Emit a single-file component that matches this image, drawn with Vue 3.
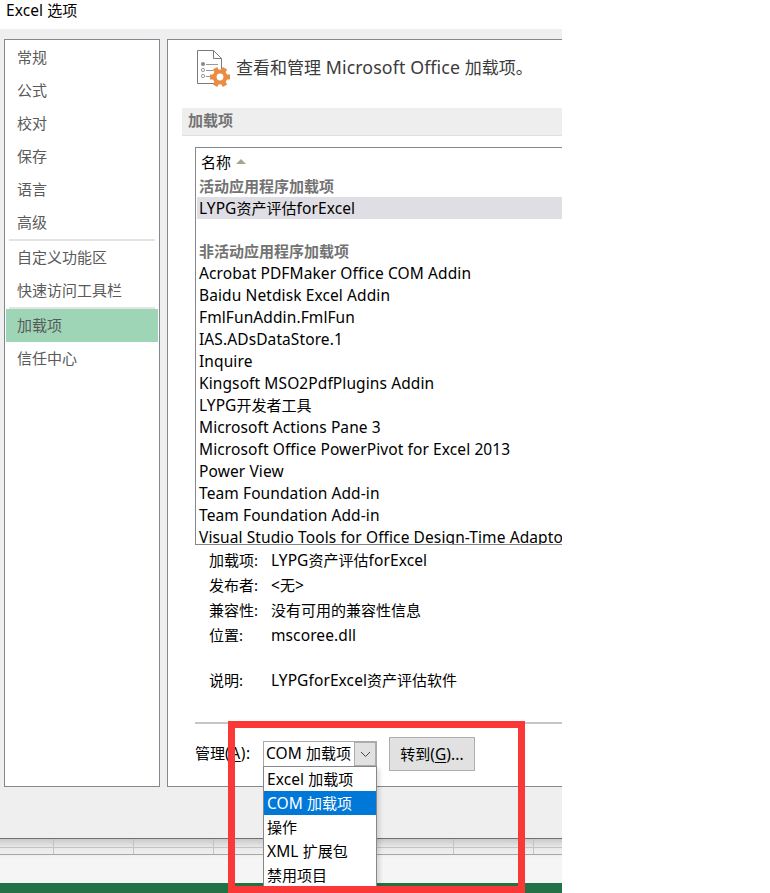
<script setup>
import { h } from 'vue'

const navGroups = [
  ['常规', '公式', '校对', '保存', '语言', '高级'],
  ['自定义功能区', '快速访问工具栏'],
  ['加载项', '信任中心'],
]
const selectedNav = '加载项'

const rows = [
  { text: '活动应用程序加载项', group: true },
  { text: 'LYPG资产评估forExcel', selected: true },
  { text: '' },
  { text: '非活动应用程序加载项', group: true },
  { text: 'Acrobat PDFMaker Office COM Addin' },
  { text: 'Baidu Netdisk Excel Addin' },
  { text: 'FmlFunAddin.FmlFun' },
  { text: 'IAS.ADsDataStore.1' },
  { text: 'Inquire' },
  { text: 'Kingsoft MSO2PdfPlugins Addin' },
  { text: 'LYPG开发者工具' },
  { text: 'Microsoft Actions Pane 3' },
  { text: 'Microsoft Office PowerPivot for Excel 2013' },
  { text: 'Power View' },
  { text: 'Team Foundation Add-in' },
  { text: 'Team Foundation Add-in' },
  { text: 'Visual Studio Tools for Office Design-Time Adapto' },
]

const details = [
  { label: '加载项:', value: 'LYPG资产评估forExcel' },
  { label: '发布者:', value: '<无>' },
  { label: '兼容性:', value: '没有可用的兼容性信息' },
  { label: '位置:', value: 'mscoree.dll' },
  { label: '说明:', value: 'LYPGforExcel资产评估软件', spaced: true },
]

const options = ['Excel 加载项', 'COM 加载项', '操作', 'XML 扩展包', '禁用项目']
const selectedOption = 'COM 加载项'

// Latin runs get their own size and tracking, Chinese runs keep the full em width.
const Mixed = (props) =>
  h('span', null, (props.text.match(/[\x20-\x7e]+|[^\x20-\x7e]+/g) || []).map((run) =>
    h('span', { class: /^[\x20-\x7e]/.test(run) ? 'latin' : 'han' }, run)))
Mixed.props = ['text']
</script>

<template>
  <div class="screen">
    <header class="titlebar"><Mixed text="Excel 选项" /></header>

    <main class="dialog">
      <nav class="nav">
        <ul v-for="(group, i) in navGroups" :key="i" class="nav-group">
          <li v-for="item in group" :key="item" class="nav-item" :class="{ selected: item === selectedNav }">{{ item }}</li>
        </ul>
      </nav>

      <section class="panel">
        <div class="heading">
          <svg class="heading-icon" width="34" height="38" viewBox="0 0 34 38" fill="none">
            <path d="M1.5 1.5H17.5L25.5 9.5V34.5H1.5Z" fill="#fff" stroke="#7b7b7b" />
            <path d="M17.5 1.5V9.5H25.5" stroke="#7b7b7b" />
            <circle cx="7" cy="15" r="2.1" fill="#8a8a8a" />
            <circle cx="7" cy="21" r="1.6" stroke="#999" />
            <circle cx="7" cy="27" r="1.6" stroke="#999" />
            <path d="M10 15.5H22M10 21.5H17M10 27.5H14" stroke="#999" />
            <g transform="translate(24 28)">
              <circle r="6.1" fill="#fff" stroke="#fff" stroke-width="4" />
              <g fill="#e88d43">
                <rect v-for="a in [0, 60, 120, 180, 240, 300]" :key="a" x="6" y="-2.5" width="4" height="5" :transform="`rotate(${a})`" />
              </g>
              <circle r="5.4" stroke="#e88d43" stroke-width="4" />
            </g>
          </svg>
          <h1><Mixed text="查看和管理 Microsoft Office 加载项。" /></h1>
        </div>

        <h2 class="section-title">加载项</h2>

        <div class="body">
          <div class="list">
            <div class="list-head">名称<span class="sort"></span></div>
            <div v-for="(row, i) in rows" :key="i" class="row" :class="{ group: row.group, selected: row.selected }">
              <Mixed :text="row.text" />
            </div>
          </div>

          <dl class="details">
            <div v-for="d in details" :key="d.label" class="detail" :class="{ spaced: d.spaced }">
              <dt>{{ d.label }}</dt>
              <dd><Mixed :text="d.value" /></dd>
            </div>
          </dl>

          <div class="manage">
            <label class="manage-label">管理<span class="latin">(<u>A</u>):</span></label>
            <div class="select">
              <span class="select-value"><Mixed :text="selectedOption" /></span>
              <span class="select-arrow">
                <svg width="11" height="7" viewBox="0 0 11 7" fill="none"><path d="M1 1L5.5 5.5L10 1" stroke="#444" /></svg>
              </span>
              <ul class="menu">
                <li v-for="o in options" :key="o" :class="{ selected: o === selectedOption }"><Mixed :text="o" /></li>
              </ul>
            </div>
            <button class="go">转到<span class="latin">(<u>G</u>)...</span></button>
          </div>
        </div>
      </section>
    </main>

    <footer class="sheet">
      <div class="cells top"><i v-for="n in 8" :key="n"></i></div>
      <div class="cells"><i v-for="n in 8" :key="n"></i></div>
      <div class="tabs"></div>
      <div class="status"></div>
    </footer>

    <div class="marker"></div>
  </div>
</template>

<style>
body {
  background: #fff;
}
</style>

<style scoped>
.screen {
  position: relative;
  width: 562px;
  height: 893px;
  overflow: hidden;
  font: 15px/22px 'Noto Sans', 'Noto Sans CJK SC', sans-serif;
  color: #000;
  white-space: nowrap;
}
.screen :deep(.latin) {
  font-size: 15.5px;
  line-height: 1;
  letter-spacing: 0.1px;
  white-space: pre;
}
ul, dl, dd, h1, h2 {
  margin: 0;
  padding: 0;
  list-style: none;
  font-weight: 400;
}
.titlebar {
  height: 29px;
  padding-left: 6px;
  box-sizing: border-box;
  line-height: 20px;
}
.dialog {
  display: flex;
  gap: 7px;
  height: 810px;
  box-sizing: border-box;
  padding: 10px 0 51px 4px;
  background: #efefef;
  border-bottom: 1px solid #707070;
}
.nav {
  width: 156px;
  box-sizing: border-box;
  padding: 1px;
  border: 1px solid #828790;
  background: #fff;
  color: #5a5a5a;
}
.nav-group + .nav-group::before {
  content: '';
  display: block;
  height: 2px;
  margin: 0 3px;
  background: #e3e3e6;
}
.nav-item {
  height: 33px;
  padding-left: 11px;
  line-height: 32px;
}
.nav-item.selected {
  background: #9fd5b7;
}
.panel {
  flex: 1;
  min-width: 0;
  border: 1px solid #828790;
  border-right: 0;
  background: #fff;
}
.heading {
  display: flex;
  align-items: flex-start;
  height: 68px;
  box-sizing: border-box;
  padding: 9px 0 0 28px;
}
.heading h1 {
  margin: 7px 0 0 6px;
  font-size: 17px;
  line-height: 24px;
  color: #3b3b3b;
}
.heading h1 :deep(.latin) {
  font-size: 17.8px;
}
.section-title {
  height: 28px;
  box-sizing: border-box;
  margin-left: 14px;
  padding-left: 6px;
  font-size: 15px;
  font-weight: 700;
  line-height: 24px;
  color: #737373;
  background: #eee;
  border-bottom: 1px solid #e1e1e1;
}
.body {
  margin: 11px 0 0 27px;
}
.list {
  height: 398px;
  box-sizing: border-box;
  padding-left: 1px;
  overflow: hidden;
  border: 1px solid #828790;
  border-right: 0;
}
.list-head {
  display: flex;
  align-items: center;
  gap: 5px;
  height: 27px;
  padding-left: 4px;
}
.sort {
  border: 5px solid transparent;
  border-top: 0;
  border-bottom-color: #a5a595;
}
.row {
  height: 22px;
  padding-left: 2px;
}
.row:nth-child(n + 5) {
  line-height: 20px;
}
.row.group {
  font-weight: 700;
  color: #737373;
}
.row.selected {
  background: #dfdee4;
}
.details {
  height: 179px;
  box-sizing: border-box;
  padding: 3px 0 0 14px;
  border-bottom: 2px solid #c6c6c6;
}
.detail {
  display: flex;
  height: 25px;
  line-height: 25px;
}
.detail.spaced {
  margin-top: 20px;
}
dt {
  width: 62px;
}
.manage {
  display: flex;
  align-items: flex-start;
  padding-top: 13px;
}
.manage-label {
  width: 68px;
  margin-top: 5px;
}
.manage-label .latin {
  letter-spacing: 0.6px;
}
.select {
  position: relative;
  display: flex;
  justify-content: space-between;
  width: 114px;
  height: 26px;
  margin-top: 4px;
  box-sizing: border-box;
  border: 1px solid #a9a9ab;
}
.select-value {
  padding-left: 2px;
  line-height: 23px;
}
.select-arrow {
  display: flex;
  align-items: center;
  justify-content: center;
  width: 22px;
  box-sizing: border-box;
  border: 1px solid #adadad;
  background: #e1e1e1;
}
.menu {
  position: absolute;
  top: 24px;
  left: -1px;
  width: 114px;
  box-sizing: border-box;
  border: 1px solid #828790;
  background: #fff;
  box-shadow: 3px 3px 4px rgba(0, 0, 0, 0.12);
  z-index: 2;
}
.menu li {
  height: 24px;
  padding-left: 3px;
  line-height: 24px;
}
.menu li.selected {
  background: #0078d7;
  color: #fff;
}
.go {
  width: 86px;
  height: 34px;
  margin-left: 12px;
  padding: 0;
  border: 1px solid #adadad;
  background: #e1e1e1;
  font: inherit;
  color: #000;
}
u {
  text-decoration-thickness: 1px;
  text-underline-offset: 2px;
}
.sheet {
  background: linear-gradient(#c9c9c9, #e8e8e8 8px, #f5f5f5 20px);
}
.cells {
  display: flex;
  height: 7px;
  box-sizing: border-box;
  border-bottom: 1px solid #a6a6a6;
}
.cells.top {
  height: 9px;
  border-bottom-color: #c3c3c3;
}
.cells i {
  flex: 0 0 80px;
  box-sizing: border-box;
  border-right: 1px solid #c3c3c3;
}
.cells i:first-child {
  flex-basis: 54px;
}
.tabs {
  height: 28px;
}
.status {
  height: 10px;
  background: #217346;
}
.marker {
  position: absolute;
  left: 228px;
  top: 721px;
  width: 297px;
  height: 172px;
  box-sizing: border-box;
  border: 7px solid #fb3838;
  z-index: 3;
}
</style>
